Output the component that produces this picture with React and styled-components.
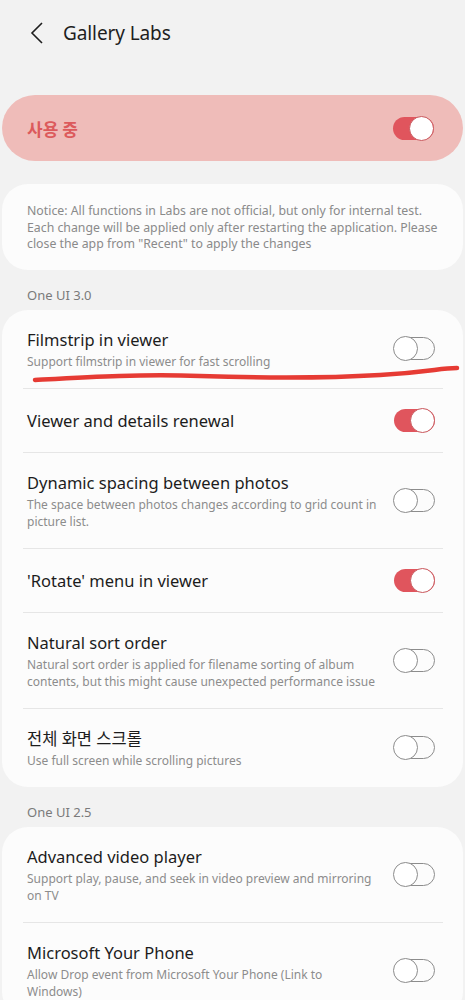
import React from "react"
import styled, { createGlobalStyle } from "styled-components"

const GlobalStyle = createGlobalStyle`
  body {
    margin: 0;
    background: #f2f2f2;
    font-family: "Noto Sans", "Noto Sans CJK KR", sans-serif;
  }
`

const Page = styled.div`
  position: relative;
  width: 465px;
  min-height: 1000px;
  overflow: hidden;
  padding: 0 2px;
  box-sizing: border-box;
`

const Header = styled.div`
  display: flex;
  align-items: center;
  height: 66px;
  padding-left: 28px;
  gap: 19px;
  color: #1e1e1e;
`

const Title = styled.h1`
  margin: 0;
  font-size: 19px;
  font-weight: 400;
  letter-spacing: -0.1px;
`

const MasterCard = styled.div`
  margin-top: 29px;
  height: 66px;
  border-radius: 33px;
  background: #efbcb9;
  display: flex;
  align-items: center;
  justify-content: space-between;
  padding: 0 29px 0 25px;
`

const MasterLabel = styled.span`
  color: #dc5a5c;
  font-size: 17px;
  font-weight: 700;
  font-family: "Noto Sans CJK KR", sans-serif;
`

const Card = styled.div`
  background: #fcfcfc;
  border-radius: 26px;
  margin-top: ${(p) => p.$top || 0}px;
`

const Notice = styled(Card)`
  padding: 19px 24px 17px 25px;
  font-size: 12.3px;
  line-height: 16.5px;
  color: #8a8a8a;
`

const SectionLabel = styled.div`
  margin: 17px 0 6px 25px;
  font-size: 13px;
  line-height: 17px;
  color: #7a7a7a;
`

const Row = styled.div`
  display: flex;
  align-items: center;
  margin: 0 20px 0 21px;
  padding: 18px 8px 18px 4px;
  border-bottom: ${(p) => (p.$last ? "none" : "1px solid #e6e6e6")};
`

const RowText = styled.div`
  flex: 1;
  min-height: 27px;
  display: flex;
  flex-direction: column;
  justify-content: center;
  padding-right: 16px;
`

const RowTitle = styled.div`
  font-size: 16.5px;
  line-height: 23px;
  color: #1c1c1c;
`

const RowSub = styled.div`
  margin-top: 2px;
  font-size: 12px;
  line-height: 17px;
  color: #8c8c8c;
`

const Toggle = styled.div`
  position: relative;
  flex: none;
  width: 42px;
  height: 25px;
`

const Track = styled.div`
  position: absolute;
  left: 1px;
  right: 0;
  top: 1px;
  bottom: 1px;
  border-radius: 12px;
  box-sizing: border-box;
  background: ${(p) => (p.$on ? "#e0555d" : "transparent")};
  border: ${(p) => (p.$on ? "none" : "1.4px solid #8c8c8c")};
`

const Thumb = styled.div`
  position: absolute;
  top: 0;
  ${(p) => (p.$on ? "right: 0;" : "left: 0;")}
  width: 25px;
  height: 25px;
  border-radius: 50%;
  box-sizing: border-box;
  background: #fff;
  border: 1.4px solid ${(p) => (p.$on ? "#c9575c" : "#8c8c8c")};
`

const Scribble = styled.svg`
  position: absolute;
  left: 0;
  top: 0;
  pointer-events: none;
`

const Switch = ({ on }) => (
  <Toggle>
    <Track $on={on} />
    <Thumb $on={on} />
  </Toggle>
)

const Setting = ({ title, sub, on, last }) => (
  <Row $last={last}>
    <RowText>
      <RowTitle>{title}</RowTitle>
      {sub && <RowSub>{sub}</RowSub>}
    </RowText>
    <Switch on={on} />
  </Row>
)

const oneUi3 = [
  { title: "Filmstrip in viewer", sub: "Support filmstrip in viewer for fast scrolling" },
  { title: "Viewer and details renewal", on: true },
  {
    title: "Dynamic spacing between photos",
    sub: "The space between photos changes according to grid count in picture list.",
  },
  { title: "'Rotate' menu in viewer", on: true },
  {
    title: "Natural sort order",
    sub: "Natural sort order is applied for filename sorting of album contents, but this might cause unexpected performance issue",
  },
  { title: "전체 화면 스크롤", sub: "Use full screen while scrolling pictures" },
]

const oneUi25 = [
  {
    title: "Advanced video player",
    sub: "Support play, pause, and seek in video preview and mirroring on TV",
  },
  {
    title: "Microsoft Your Phone",
    sub: "Allow Drop event from Microsoft Your Phone (Link to Windows)",
  },
]

export default function App() {
  return (
    <Page>
      <GlobalStyle />
      <Header>
        <svg width="14" height="22" viewBox="0 0 14 22">
          <path d="M12 1 L2 11 L12 21" fill="none" stroke="#1e1e1e" strokeWidth="1.6" />
        </svg>
        <Title>Gallery Labs</Title>
      </Header>

      <MasterCard>
        <MasterLabel>사용 중</MasterLabel>
        <Switch on />
      </MasterCard>

      <Notice $top={23}>
        Notice: All functions in Labs are not official, but only for internal test.
        Each change will be applied only after restarting the application. Please
        close the app from "Recent" to apply the changes
      </Notice>

      <SectionLabel>One UI 3.0</SectionLabel>
      <Card>
        {oneUi3.map((s, i) => (
          <Setting key={s.title} {...s} last={i === oneUi3.length - 1} />
        ))}
      </Card>

      <SectionLabel>One UI 2.5</SectionLabel>
      <Card>
        {oneUi25.map((s, i) => (
          <Setting key={s.title} {...s} last={i === oneUi25.length - 1} />
        ))}
      </Card>

      <Scribble width="465" height="400" viewBox="0 0 465 400">
        <path
          d="M35 380 C 90 377, 140 374, 200 376 S 330 378, 380 375 S 440 368, 457 368"
          fill="none"
          stroke="#e63b34"
          strokeWidth="4.5"
          strokeLinecap="round"
        />
      </Scribble>
    </Page>
  )
}
